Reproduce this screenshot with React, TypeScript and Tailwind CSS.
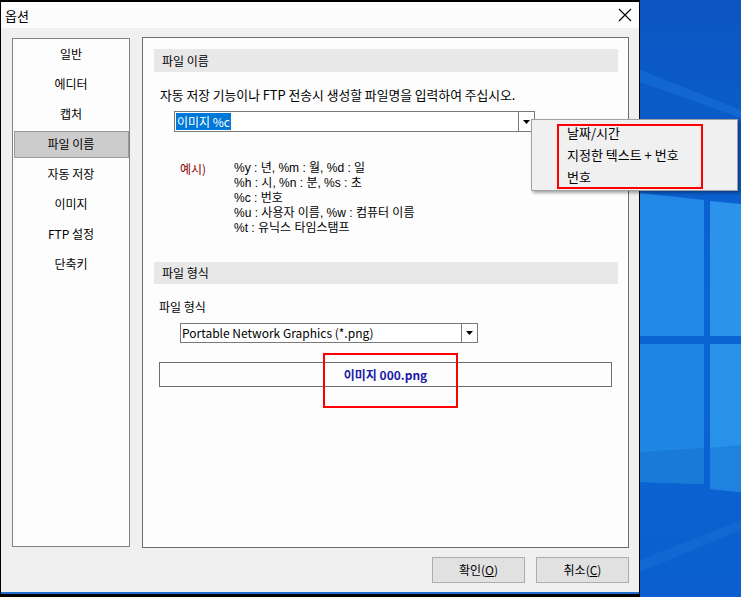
import React from 'react';

const navItems = ['일반', '에디터', '캡처', '파일 이름', '자동 저장', '이미지', 'FTP 설정', '단축키'];

const exampleLines = [
  '%y : 년, %m : 월, %d : 일',
  '%h : 시, %n : 분, %s : 초',
  '%c : 번호',
  '%u : 사용자 이름, %w : 컴퓨터 이름',
  '%t : 유닉스 타임스탬프',
];

const menuItems = ['날짜/시간', '지정한 텍스트 + 번호', '번호'];

const Arrow = () => (
  <svg width="7" height="4" viewBox="0 0 7 4"><path d="M0 0h7L3.5 4z" fill="#000" /></svg>
);

const Wallpaper = () => (
  <svg width="101" height="597" viewBox="0 0 101 597" className="block">
    <defs>
      <linearGradient id="bg" x1="0" y1="0" x2="0" y2="1">
        <stop offset="0" stopColor="#0b55c2" />
        <stop offset="0.5" stopColor="#0a66d4" />
        <stop offset="1" stopColor="#0b5fce" />
      </linearGradient>
    </defs>
    <rect width="101" height="597" fill="url(#bg)" />
    <path d="M0 70 L101 110 L101 118 L0 82z" fill="#1a74dc" opacity="0.5" />
    <path d="M0 193 L64 200 L64 336 L0 336z" fill="#2288e6" />
    <path d="M70 201 L101 204 L101 336 L70 336z" fill="#2b93ec" />
    <path d="M0 344 L64 344 L64 484 L0 482z" fill="#1f86e4" />
    <path d="M70 344 L101 344 L101 492 L70 489z" fill="#2891ea" />
    <path d="M0 452 L64 448 L64 484 L0 482z" fill="#1a7ad8" />
    <path d="M70 448 L101 445 L101 492 L70 489z" fill="#1f82de" />
    <path d="M0 560 L101 520 L101 530 L0 572z" fill="#1a6fd6" opacity="0.5" />
  </svg>
);

export default function App() {
  return (
    <div className="relative w-[741px] h-[597px] bg-black overflow-hidden flex text-[12px] text-black" style={{ fontFamily: '"Noto Sans CJK KR", "Noto Sans", sans-serif' }}>
      {/* dialog */}
      <div className="ml-px mt-[2px] w-[638px] h-[592px] flex flex-col bg-[#f0f0f0]">
        <div className="h-[26px] bg-[#fcfcfc] flex items-center justify-between pl-[4px] pr-[7px]">
          <span className="text-[13px] leading-none">옵션</span>
          <svg width="14" height="14" viewBox="0 0 14 14"><path d="M1 1L13 13M13 1L1 13" stroke="#000" strokeWidth="1.2" /></svg>
        </div>

        <div className="flex gap-[12px] pl-[11px] pt-[9px]">
          {/* nav */}
          <div className="mt-px w-[118px] h-[509px] bg-[#fdfdfd] border border-[#828282] flex flex-col">
            {navItems.map(n => (
              <div key={n} className="h-[30px] flex items-center justify-center">
                {n === '파일 이름' ? (
                  <div className="w-[115px] h-[27px] bg-[#cccccc] border border-[#9a9a9a] flex items-center justify-center">{n}</div>
                ) : n}
              </div>
            ))}
          </div>

          {/* content */}
          <div className="relative w-[487px] h-[511px] bg-[#fdfdfd] border border-[#6e6e6e] pl-[11px] pr-[10px] pt-[11px]">
            <div className="h-[23px] bg-[#e8e8e8] flex items-center pl-[8px]">파일 이름</div>
            <p className="mt-[15px] ml-[6px] leading-[16px] text-[12.8px]">자동 저장 기능이나 FTP 전송시 생성할 파일명을 입력하여 주십시오.</p>
            <div className="mt-[8px] ml-[20px] w-[361px] h-[21px] flex border border-[#7a7a7a] bg-white">
              <div className="flex-1 flex items-center pl-px">
                <span className="bg-[#0078d7] text-white leading-[17px] px-px">이미지 %c</span>
              </div>
              <div className="w-[16px] border-l border-[#7a7a7a] flex items-center justify-center"><Arrow /></div>
            </div>

            <div className="mt-[29px] ml-[26px] flex">
              <span className="w-[54px] text-[#8b0000] leading-[15px]">예시)</span>
              <div className="flex flex-col leading-[15px] font-['Liberation_Sans','Noto_Sans_CJK_KR',sans-serif]">
                {exampleLines.map(l => <span key={l} className="h-[15px]">{l}</span>)}
              </div>
            </div>

            <div className="mt-[26px] h-[22px] bg-[#e8e8e8] flex items-center pl-[8px]">파일 형식</div>
            <p className="mt-[15px] ml-[5px] leading-[16px]">파일 형식</p>
            <div className="mt-[8px] ml-[26px] w-[298px] h-[20px] flex border border-[#7a7a7a] bg-white">
              <div className="flex-1 flex items-center pl-[1px]">Portable Network Graphics (*.png)</div>
              <div className="w-[16px] border-l border-[#7a7a7a] flex items-center justify-center"><Arrow /></div>
            </div>
            <div className="mt-[19px] ml-[5px] w-[453px] h-[25px] border border-[#6e6e6e] flex items-center justify-center font-bold text-[#1a1aa8]">이미지 000.png</div>

            <div className="absolute left-[180px] top-[315px] w-[135px] h-[55px] border-2 border-[#ff0000]" />
          </div>
        </div>

        <div className="flex justify-end gap-[11px] pr-[10px] mt-[9px]">
          <button className="w-[93px] h-[26px] bg-[#e1e1e1] border border-[#adadad]">확인(<span className="underline">O</span>)</button>
          <button className="w-[93px] h-[26px] bg-[#e1e1e1] border border-[#adadad]">취소(<span className="underline">C</span>)</button>
        </div>
        <div className="mt-auto h-[2px] bg-[#1f6fd2]" />
      </div>

      {/* desktop */}
      <div className="ml-px">
        <Wallpaper />
      </div>

      {/* dropdown menu */}
      <div className="absolute left-[531px] top-[119px] w-[207px] h-[72px] bg-[#f0f0f0] border border-[#a0a0a0] shadow-[2px_2px_3px_rgba(0,0,0,0.35)] pl-[35px] pt-[2px] text-[13px]">
        {menuItems.map(m => (
          <div key={m} className="h-[22px] flex items-center">{m}</div>
        ))}
        <div className="absolute left-[25px] top-[4px] w-[146px] h-[65px] border-2 border-[#ff0000]" />
      </div>
    </div>
  );
}
